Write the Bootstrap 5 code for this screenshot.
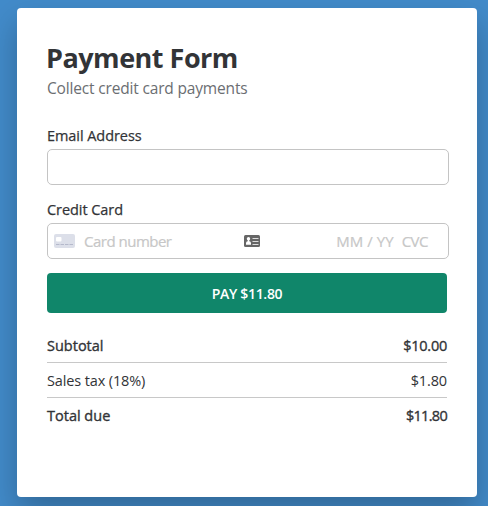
<!DOCTYPE html>
<html lang="en">
<head>
<meta charset="utf-8">
<meta name="viewport" content="width=device-width, initial-scale=1">
<title>Payment Form</title>
<link href="https://cdn.jsdelivr.net/npm/bootstrap@5.3.0/dist/css/bootstrap.min.css" rel="stylesheet">
<style>
body{background:#428bca;color:#323437;font-family:"Open Sans","Noto Sans",sans-serif;font-size:15px;line-height:20px}
.pay-page{height:100vh;padding:8px 0 0 17px;overflow:hidden}
.pay-panel{width:460px;height:489px;padding:34px 30px 0;border-radius:4px;box-shadow:0 15px 32px rgba(0,0,0,.25)}
.pay-title{font-size:27px;line-height:32px;font-weight:700;color:#323437;letter-spacing:-.5px;margin-left:-1px}
.pay-sub{font-size:15.5px;line-height:22px;color:#6b6e72;letter-spacing:-.17px;margin-top:3px}
.pay-form{padding-top:27px}
.pay-label{font-size:14.5px;line-height:20px;margin-bottom:3px;letter-spacing:-.06px;-webkit-text-stroke:.25px currentColor}
.pay-field{width:402px;height:36px;border:1px solid #c4c4c4;border-radius:5px;padding:0 20px 0 6px}
.field-gap{margin-bottom:15px}
.ghost{color:#c7c7c7;font-size:15px;letter-spacing:-.5px;-webkit-text-stroke:.2px currentColor}
.ghost-date{letter-spacing:.05px}
.number-box{width:169px;padding-left:9px}
.pay-btn{height:40px;margin-top:14px;margin-bottom:15px;background:#10866a;border-radius:4px;font-size:14px;font-weight:600;letter-spacing:-.3px}
.pay-btn:hover{background:#0d765d}
.pay-row{height:35px;padding-top:1px;font-size:14.5px;letter-spacing:-.13px;border-bottom:1px solid #c8c8c8}
.pay-row:last-child{border-bottom:0;padding-top:0}
.medium{-webkit-text-stroke:.35px currentColor;letter-spacing:0}
.medium .amount{letter-spacing:-.25px}
.total .amount{letter-spacing:-.7px}
</style>
</head>
<body>
<div class="pay-page">
<main class="pay-panel bg-white">
<h1 class="pay-title mb-0">Payment Form</h1>
<p class="pay-sub mb-0">Collect credit card payments</p>
<form class="pay-form">
<label class="pay-label d-block" for="email">Email Address</label>
<input class="pay-field field-gap form-control shadow-none" id="email" type="email">
<label class="pay-label d-block">Credit Card</label>
<div class="pay-field d-flex align-items-center">
<svg width="21" height="14" viewBox="0 0 21 14"><rect width="21" height="14" rx="2" fill="#dcdfe9"/><rect x="2" y="3" width="5.5" height="4.5" rx="1" fill="#fff"/><path d="M2 10.5h17" stroke="#b5b9cb" stroke-dasharray="3.5 1"/></svg>
<span class="ghost number-box">Card number</span>
<svg width="16" height="12" viewBox="0 0 16 12" class="me-auto"><rect width="16" height="12" rx="1.5" fill="#666"/><circle cx="4.5" cy="3.7" r="1.7" fill="#fff"/><path d="M2 9.8V8.2q0-1.7 1.7-1.9l.1-1.3h1.4l.1 1.3Q7 6.500 7 8.200v1.600z" fill="#fff"/><path d="M8.500 3.500H14.500M8.500 6.500H14.500M8.500 9.500H14.500" stroke="#ddd"/></svg>
<span class="ghost ghost-date">MM / YY</span><span class="ghost ms-2">CVC</span>
</div>
<button type="button" class="pay-btn btn d-block w-100 text-white p-0">PAY $11.80</button>
</form>
<section>
<div class="pay-row d-flex justify-content-between align-items-center medium"><span>Subtotal</span><span class="amount">$10.00</span></div>
<div class="pay-row d-flex justify-content-between align-items-center"><span>Sales tax (18%)</span><span class="amount">$1.80</span></div>
<div class="pay-row d-flex justify-content-between align-items-center medium total"><span>Total due</span><span class="amount">$11.80</span></div>
</section>
</main>
</div>
<script src="https://cdn.jsdelivr.net/npm/bootstrap@5.3.0/dist/js/bootstrap.bundle.min.js"></script>
</body>
</html>
